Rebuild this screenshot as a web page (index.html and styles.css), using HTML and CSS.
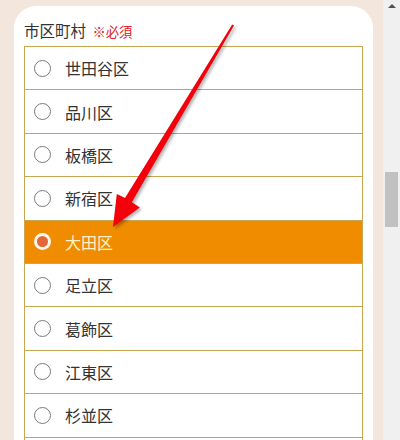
FILE: index.html
```html
<!DOCTYPE html>
<html lang="ja">
<head>
<meta charset="utf-8">
<link rel="stylesheet" href="styles.css">
</head>
<body>
<div class="page">
  <main class="main">
    <section class="card">
      <div class="label">市区町村 <span class="req">※必須</span></div>
      <ul class="list">
        <li class="row"><span class="radio"></span><span class="name">世田谷区</span></li>
        <li class="row"><span class="radio"></span><span class="name">品川区</span></li>
        <li class="row"><span class="radio"></span><span class="name">板橋区</span></li>
        <li class="row"><span class="radio"></span><span class="name">新宿区</span></li>
        <li class="row selected"><span class="radio"></span><span class="name">大田区</span></li>
        <li class="row"><span class="radio"></span><span class="name">足立区</span></li>
        <li class="row"><span class="radio"></span><span class="name">葛飾区</span></li>
        <li class="row"><span class="radio"></span><span class="name">江東区</span></li>
        <li class="row"><span class="radio"></span><span class="name">杉並区</span></li>
        <li class="row"></li>
      </ul>
    </section>
  </main>
  <div class="scrollbar">
    <div class="arrow-up"></div>
    <div class="thumb"></div>
  </div>
  <svg class="pointer" width="400" height="440" viewBox="0 0 400 440">
    <polygon points="232.2,24.5 234,25.5 131.8,202.3 139.8,207.5 113,227 116.8,194 125,198.1" fill="#f5000a"/>
  </svg>
</div>
</body>
</html>
```

FILE: styles.css
```css
html, body {
  margin: 0;
  padding: 0;
  height: 440px;
  overflow: hidden;
}
body {
  background: #f3e6dc;
  font-family: "Noto Sans CJK JP", "Noto Sans", sans-serif;
  color: #333;
}
.page {
  position: relative;
  display: flex;
  width: 400px;
  height: 440px;
}
.main {
  flex: 0 0 383px;
  padding: 6px 10px 0 14px;
  box-sizing: border-box;
}
.card {
  background: #fff;
  border-radius: 22px 22px 0 0;
  padding: 12px 10px 0 10px;
  height: 600px;
}
.label {
  font-size: 15.5px;
  line-height: 24px;
  height: 24px;
  margin-bottom: 4px;
  color: #333;
}
.req {
  font-size: 13.3px;
  color: #e0202a;
  margin-left: 3px;
}
.list {
  list-style: none;
  margin: 0;
  padding: 0;
  border-left: 1px solid #c9a650;
  border-right: 1px solid #c9a650;
}
.row {
  display: flex;
  align-items: center;
  height: 42.4px;
  border-top: 1px solid #c9a650;
  padding-left: 9px;
  gap: 14px;
  font-size: 16px;
  color: #333;
}
.radio {
  width: 17px;
  height: 17px;
  box-sizing: border-box;
  border: 1px solid #7a7a7a;
  border-radius: 50%;
  background: #fff;
  flex: none;
}
.name {
  line-height: 20px;
}
.row.selected {
  background: #ef8c00;
  color: #fff2c6;
}
.row.selected .radio {
  border: 3.5px solid #fff6ea;
  background: #e2663a;
}
.scrollbar {
  flex: 0 0 17px;
  background: #f0f0f0;
  position: relative;
}
.arrow-up {
  width: 0;
  height: 0;
  margin: 4px auto 0;
  border-left: 4px solid transparent;
  border-right: 4px solid transparent;
  border-bottom: 4px solid #505050;
}
.thumb {
  margin: 164px 2px 0 2px;
  height: 55px;
  background: #c1c1c1;
}
.pointer {
  position: absolute;
  left: 0;
  top: 0;
  pointer-events: none;
  filter: drop-shadow(2px 2px 1.5px rgba(0,0,0,0.3));
}
```
